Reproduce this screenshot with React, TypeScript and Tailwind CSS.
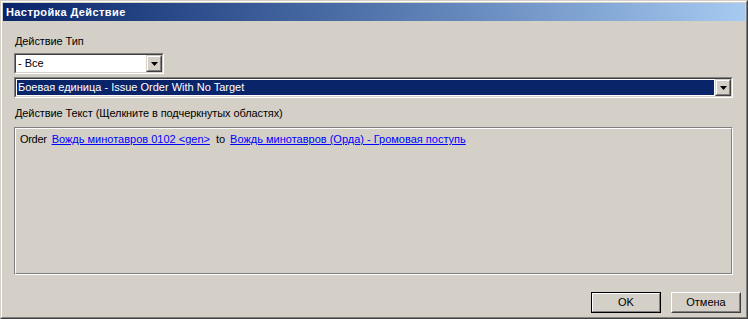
import type { FC, ReactNode } from "react";

const font = "font-['Liberation_Sans',Arial,sans-serif]";

const DropButton: FC = () => (
  <div className="flex h-[17px] w-[16px] border border-t-[#d4d0c8] border-l-[#d4d0c8] border-b-[#404040] border-r-[#404040]">
    <div className="flex flex-1 items-center justify-center border border-t-white border-l-white border-b-[#808080] border-r-[#808080] bg-[#d4d0c8]">
      <svg width="7" height="4" viewBox="0 0 7 4">
        <polygon points="0,0 7,0 3.5,4" fill="#000" />
      </svg>
    </div>
  </div>
);

const Combo: FC<{ width: string; selected?: boolean; children: ReactNode }> = ({ width, selected, children }) => (
  <div className={`flex h-[21px] ${width} border border-t-[#808080] border-l-[#808080] border-b-white border-r-white`}>
    <div className="flex flex-1 border border-t-[#404040] border-l-[#404040] border-b-[#d4d0c8] border-r-[#d4d0c8] bg-white">
      <div className="flex-1 p-px">
        <div className={`flex h-full items-center pl-px leading-[13px] ${selected ? "bg-[#0a246a] text-white" : "text-black"}`}>
          {children}
        </div>
      </div>
      <DropButton />
    </div>
  </div>
);

const Link: FC<{ children: ReactNode; className?: string }> = ({ children, className }) => (
  <span className={`text-[#0000ff] underline ${className ?? ""}`}>{children}</span>
);

const App: FC = () => {
  return (
    <div className={`h-[319px] w-[748px] overflow-hidden bg-[#d4d0c8] text-[11px] ${font}`}>
      <div className="h-full border border-t-[#d4d0c8] border-l-[#d4d0c8] border-b-[#404040] border-r-[#404040]">
        <div className="flex h-full flex-col border border-t-white border-l-white border-b-[#808080] border-r-[#808080] p-px">
          <div className="flex h-[18px] items-center bg-linear-to-r from-[#0a246a] to-[#a6caf0] pl-[3px] font-bold tracking-[0.4px] text-white">
            Настройка Действие
          </div>

          <div className="flex flex-1 flex-col pl-[11px] pt-[14px]">
            <div className="ml-px leading-[13px] tracking-[-0.1px] text-black">Действие Тип</div>

            <div className="mt-[5px]">
              <Combo width="w-[150px]">- Все</Combo>
            </div>
            <div className="mt-[3px]">
              <Combo width="w-[719px]" selected>
                Боевая единица - Issue Order With No Target
              </Combo>
            </div>

            <div className="ml-px mt-[9px] leading-[13px] tracking-[-0.1px] text-black">
              Действие Текст (Щелкните в подчеркнутых областях)
            </div>

            <div className="mt-[7px] h-[148px] w-[719px] border border-t-[#808080] border-l-[#808080] border-b-white border-r-white">
              <div className="h-full border border-t-white border-l-white border-b-[#808080] border-r-[#808080] pl-1 pt-1 leading-[13px] text-black">
                <span className="tracking-[-0.3px]">Order</span>
                <Link className="ml-[5px]">Вождь минотавров 0102 &lt;gen&gt;</Link>
                <span className="ml-[6px]">to</span>
                <Link className="ml-[5px]">Вождь минотавров (Орда) - Громовая поступь</Link>
              </div>
            </div>

            <div className="mt-[17px] flex justify-end gap-[10px] pr-[4px]">
              <button type="button" className="h-[21px] w-[70px] border border-black bg-[#d4d0c8] p-0">
                <div className="flex h-full items-center justify-center border border-t-white border-l-white border-b-[#808080] border-r-[#808080] leading-[13px] text-black">
                  OK
                </div>
              </button>
              <button type="button" className="h-[21px] w-[70px] border border-t-white border-l-white border-b-[#404040] border-r-[#404040] bg-[#d4d0c8] p-0">
                <div className="flex h-full items-center justify-center border border-t-[#d4d0c8] border-l-[#d4d0c8] border-b-[#808080] border-r-[#808080] leading-[13px] text-black">
                  Отмена
                </div>
              </button>
            </div>
          </div>
        </div>
      </div>
    </div>
  );
};

export default App;
